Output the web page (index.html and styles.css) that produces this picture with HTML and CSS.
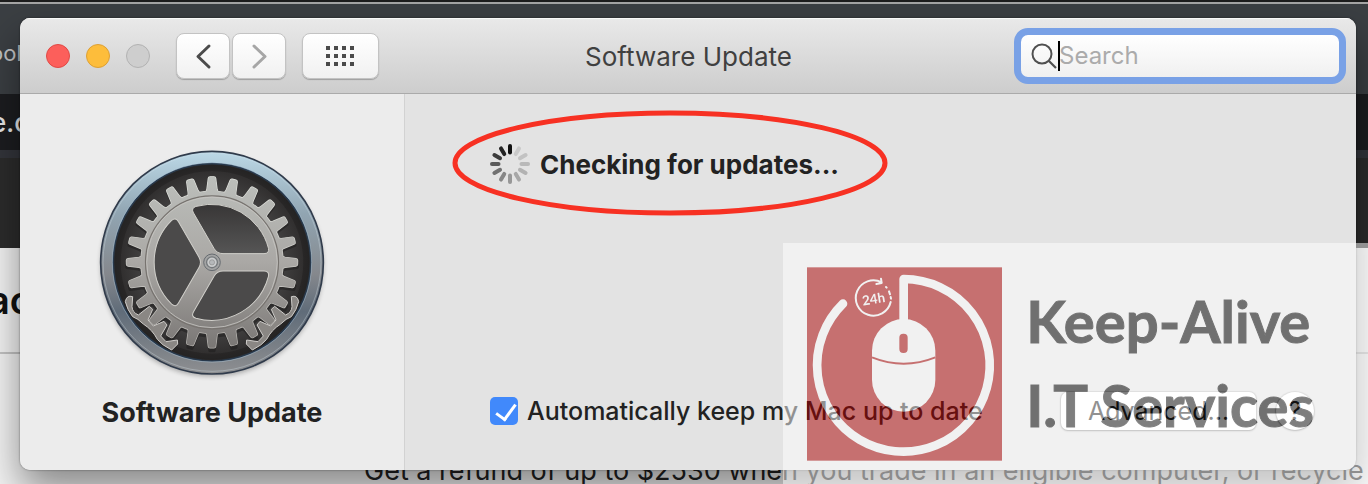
FILE: index.html
```
<!DOCTYPE html>
<html lang="en">
<head>
<meta charset="utf-8">
<title>Software Update</title>
<link rel="stylesheet" href="styles.css">
</head>
<body>
<div class="desktop">
  <div class="browser">
    <div class="tabs"><span>ool</span></div>
    <div class="address"><span>e.c</span></div>
    <div class="nav"></div>
    <div class="heading"><span>ac</span></div>
    <p class="refund">Get a refund of up to $2530 when you trade in an eligible computer, or recycle</p>
  </div>

  <main class="window">
    <header class="toolbar">
      <div class="lights">
        <button class="light close" aria-label="Close"></button>
        <button class="light minimize" aria-label="Minimize"></button>
        <button class="light zoom" aria-label="Zoom" disabled></button>
      </div>
      <div class="history">
        <button class="tool" aria-label="Back"><svg width="52" height="44" viewBox="1 0 52 44"><path d="M33 12 22 22.500 33 33" fill="none" stroke="#4c4c4c" stroke-width="3" stroke-linecap="round" stroke-linejoin="round"/></svg></button>
        <button class="tool" aria-label="Forward"><svg width="52" height="44" viewBox="1 0 52 44"><path d="M22 12 33 22.500 22 33" fill="none" stroke="#a6a6a6" stroke-width="3" stroke-linecap="round" stroke-linejoin="round"/></svg></button>
      </div>
      <button class="tool" aria-label="Show all"><svg width="75" height="44" viewBox="0 0 75 44"><path d="M23 14h28M23 22h28M23 30h28" stroke="#4a4a4a" stroke-width="4" stroke-dasharray="4 4"/></svg></button>
      <h1 class="title">Software Update</h1>
      <label class="search">
        <svg width="26" height="26" viewBox="0 0 26 26"><circle cx="11" cy="11" r="9.500" fill="none" stroke="#505050" stroke-width="2"/><path d="m18 18 7 7" stroke="#505050" stroke-width="2.200"/></svg>
        <span class="caret"></span>
        <input type="search" placeholder="Search" aria-label="Search">
      </label>
    </header>

    <div class="body">
      <aside class="sidebar">
        <svg class="gear" width="245" height="245" viewBox="0 0 735 735" aria-hidden="true">
          <defs>
            <linearGradient id="rim" x1="0" y1="0" x2="0" y2="1"><stop offset="0" stop-color="#bcd9e7"/><stop offset=".28" stop-color="#91a5b2"/><stop offset=".55" stop-color="#85888d"/><stop offset=".72" stop-color="#606c79"/><stop offset="1" stop-color="#8e8f91"/></linearGradient>
            <linearGradient id="metal" x1="0" y1="0" x2="0" y2="1"><stop offset="0" stop-color="#bdc0bc"/><stop offset=".5" stop-color="#aaa8a5"/><stop offset="1" stop-color="#777472"/></linearGradient>
            <linearGradient id="edge" x1="0" y1="0" x2="0" y2="1"><stop offset="0" stop-color="#e2e4df"/><stop offset="1" stop-color="#b5b2ae"/></linearGradient>
            <radialGradient id="well"><stop offset="0" stop-color="#5b5b5b"/><stop offset=".65" stop-color="#464545"/><stop offset="1" stop-color="#2b2929"/></radialGradient>
            <linearGradient id="hole" gradientUnits="userSpaceOnUse" x1="0" y1="-60" x2="0" y2="60"><stop offset="0" stop-color="#373535"/><stop offset=".45" stop-color="#575757"/><stop offset=".53" stop-color="#3e3d3d"/><stop offset="1" stop-color="#4e4c4c"/></linearGradient>
            <filter id="soft" x="-20%" y="-20%" width="140%" height="140%"><feGaussianBlur stdDeviation="8"/></filter>
            <path id="tooth" d="M-6.500-69-5-73-3.600-84Q-3.400-85.500-2-85.500H2Q3.400-85.500 3.600-84L5-73 6.500-69Z"/>
            <g id="teeth6"><use href="#tooth"/><use href="#tooth" transform="rotate(15)"/><use href="#tooth" transform="rotate(30)"/><use href="#tooth" transform="rotate(45)"/><use href="#tooth" transform="rotate(60)"/><use href="#tooth" transform="rotate(75)"/></g>
            <g id="wheel"><use href="#teeth6"/><use href="#teeth6" transform="rotate(90)"/><use href="#teeth6" transform="rotate(180)"/><use href="#teeth6" transform="rotate(270)"/><circle r="71"/></g>
            <mask id="face" maskUnits="userSpaceOnUse" x="-90" y="-90" width="180" height="180"><use href="#wheel" fill="#fff"/></mask>
            <mask id="outline" maskUnits="userSpaceOnUse" x="-90" y="-90" width="180" height="180"><use href="#wheel" fill="#fff" stroke="#fff" stroke-width="1.400"/></mask>
            <path id="gap" d="M11-8.700H52Q57.500-8.700 56.500-14A59 59 0 0 0-16.100-55.900Q-21.200-54.100-18.500-49.400L2-13.900Q5-8.700 11-8.700Z"/>
            <path id="claw" d="M106 485Q110 464 128 470L126 500Q127 517 145 525L178 499 188 508 174 540 190 558 222 544 231 555 212 588 228 605 262 600 263 612 245 630Q215 615 202 598 188 570 160 552 143 535 128 530 112 510 106 485Z"/>
          </defs>
          <circle cx="366" cy="376" r="333" fill="#000" opacity=".3" filter="url(#soft)"/>
          <circle cx="366" cy="368" r="334" fill="url(#rim)" stroke="#303b4b" stroke-width="5"/>
          <circle cx="366" cy="367" r="327" fill="none" stroke="#d3e1e8" stroke-width="2" opacity=".55"/>
          <circle cx="366" cy="367" r="296" fill="url(#well)" stroke="#27384b" stroke-width="5"/>
          <circle cx="366" cy="367" r="299" fill="none" stroke="#b4cee0" stroke-width="2" opacity=".7"/>
          <circle cx="366" cy="367" r="283" fill="none" stroke="#111" stroke-width="18" opacity=".25"/>
          <use href="#wheel" fill="#1c1b1b" opacity=".5" transform="translate(366 376) scale(3.050)"/>
          <g fill="#8a8784" stroke="#cfcdca" stroke-width="3"><use href="#claw"/><use href="#claw" transform="matrix(-1 0 0 1 732 0)"/></g>
          <g transform="translate(366 367) scale(3)">
            <rect x="-90" y="-90" width="180" height="180" fill="url(#edge)" mask="url(#outline)"/>
            <rect x="-90" y="-90" width="180" height="180" fill="url(#metal)" mask="url(#face)"/>
            <circle r="66.500" fill="none" stroke="#77736f" stroke-width="1.200"/>
            <circle r="65.300" fill="none" stroke="#c8c7c3" stroke-width=".8"/>
            <g fill="url(#hole)" stroke="#d1d0cb" stroke-width="1"><use href="#gap"/></g>
            <g fill="#4b4a4a" stroke="#d1d0cb" stroke-width="1"><use href="#gap" transform="rotate(120)"/><use href="#gap" transform="rotate(240)"/></g>
            <circle r="8.300" fill="#a3a4a4" stroke="#666b70" stroke-width="1"/>
            <circle r="5.400" fill="#cacccd" stroke="#74787b" stroke-width="1.300"/>
            <circle r="2.600" fill="#b5b8ba" stroke="#888" stroke-width=".6"/>
          </g>
        </svg>
        <h2 class="pane-name">Software Update</h2>
      </aside>

      <section class="pane">
        <div class="status">
          <svg width="40" height="40" viewBox="-20 -20 40 40" aria-hidden="true"><g stroke-width="4" stroke-linecap="round">
            <path d="M0-18V-11.500" stroke="#111"/>
            <path d="M0-18V-11.500" stroke="#c9c9c9" transform="rotate(30)"/>
            <path d="M0-18V-11.500" stroke="#c2c2c2" transform="rotate(60)"/>
            <path d="M0-18V-11.500" stroke="#b9b9b9" transform="rotate(90)"/>
            <path d="M0-18V-11.500" stroke="#b2b2b2" transform="rotate(120)"/>
            <path d="M0-18V-11.500" stroke="#a7a7a7" transform="rotate(150)"/>
            <path d="M0-18V-11.500" stroke="#979797" transform="rotate(180)"/>
            <path d="M0-18V-11.500" stroke="#868686" transform="rotate(210)"/>
            <path d="M0-18V-11.500" stroke="#717171" transform="rotate(240)"/>
            <path d="M0-18V-11.500" stroke="#5b5b5b" transform="rotate(270)"/>
            <path d="M0-18V-11.500" stroke="#3c3c3c" transform="rotate(300)"/>
            <path d="M0-18V-11.500" stroke="#242424" transform="rotate(330)"/>
          </g></svg>
          <strong>Checking for updates...</strong>
          <svg class="callout" width="438" height="108" viewBox="0 0 438 108" aria-hidden="true"><ellipse cx="219" cy="54" rx="215" ry="50" fill="none" stroke="#f73123" stroke-width="5"/></svg>
        </div>
        <div class="options">
          <label class="auto"><input type="checkbox" checked><span>Automatically keep my Mac up to date</span></label>
          <button class="advanced">Advanced...</button>
          <button class="help" aria-label="Help">?</button>
        </div>
      </section>
    </div>
  </main>

  <div class="brand">
    <svg width="195" height="194" viewBox="82 98 585 580" aria-hidden="true">
      <rect x="82" y="98" width="585" height="580" fill="#aa0000"/>
      <path d="M372 260V133A259 259 0 1 1 190 207" fill="none" stroke="#fff" stroke-width="26" stroke-linecap="round" stroke-linejoin="round"/>
      <path d="M277 348a95 95 0 0 1 190 0v88a95 95 0 0 1-190 0Z" fill="#fff"/>
      <path d="M277 368Q372 406 467 368" fill="none" stroke="#aa0000" stroke-width="6"/>
      <rect x="359" y="297" width="25" height="58" rx="12" fill="#aa0000"/>
      <path d="M306 143A53 53 0 1 0 333 202M290 148l16-3-2-13" fill="none" stroke="#fff" stroke-width="6" stroke-linecap="round" stroke-linejoin="round"/>
      <path d="M319 157l2 2M328 170l3 9M333 187l1 5" stroke="#fff" stroke-width="6" stroke-linecap="round"/>
      <text x="282" y="207" class="hours" transform="rotate(-9 282 195)">24h</text>
    </svg>
    <p class="brand-name"><span>Keep-Alive</span><span>I.T Services</span></p>
  </div>
</div>
</body>
</html>
```
FILE: styles.css
```
* { box-sizing: border-box; }

body {
  margin: 0;
  font-family: Inter, "Liberation Sans", sans-serif;
  color: #222;
}

h1, h2, p { margin: 0; }

button {
  padding: 0;
  border: 0;
  font: inherit;
  color: inherit;
}

svg { display: block; flex: none; }

.desktop {
  display: grid;
  min-height: 100vh;
  overflow: hidden;
}

.browser, .window, .brand { grid-area: 1 / 1; }

/* Page behind the window */
.browser {
  display: flex;
  flex-direction: column;
  min-width: 0;
  background: #f4f4f4;
  white-space: nowrap;
}

.tabs {
  height: 94px;
  padding-top: 35px;
  border-top: 2px solid #1d1d1d;
  background: linear-gradient(#a5a5a5 2px, #3b3f43 2px);
  font-size: 22px;
  line-height: 32px;
  color: #c4c4c6;
}

.tabs span { margin-left: -10px; }

.address {
  height: 64px;
  border-bottom: 8px solid #33353b;
  background: #1c1d20;
  font-size: 26px;
  font-weight: 500;
  line-height: 58px;
  color: #e8e8ea;
}

.address span { margin-left: -9px; }

.nav { height: 90px; background: #2c2c2c; }

.heading {
  height: 106px;
  border-bottom: 2px solid #c4c4c4;
  font-size: 38px;
  font-weight: 600;
  line-height: 104px;
  color: #111;
}

.heading span { margin-left: -12px; }

.refund {
  margin-top: auto;
  padding-left: 364px;
  font-size: 27px;
  line-height: 26px;
}

/* Preferences window */
.window {
  display: flex;
  flex-direction: column;
  margin: 18px 12px 14px 20px;
  border-radius: 10px;
  overflow: hidden;
  background: #e3e3e3;
  box-shadow: 0 0 2px rgba(0, 0, 0, .5), 0 20px 40px rgba(0, 0, 0, .45);
}

.toolbar {
  display: flex;
  align-items: center;
  height: 76px;
  padding: 0 10px 0 26px;
  border-bottom: 1px solid #aaa;
  background: linear-gradient(#e9e9e9, #cdcdcd);
  box-shadow: inset 0 1px #f8f8f8;
}

.lights { display: flex; gap: 16px; margin-right: 26px; }

.light {
  width: 24px;
  height: 24px;
  border: 1px solid #b2b2b2;
  border-radius: 50%;
  background: #cecece;
}

.close { border-color: #e04a46; background: #fc5f5b; }
.minimize { border-color: #dda035; background: #fdbd3b; }

.history { display: flex; gap: 2px; margin-right: 16px; }

.tool {
  border: 1px solid #c3c3c3;
  border-radius: 8px;
  background: linear-gradient(#fff, #f1f1f1);
  box-shadow: 0 1px 1px rgba(0, 0, 0, .25);
}

.title {
  flex: 1;
  padding: 2px 16px 0 0;
  font-size: 26px;
  font-weight: 400;
  text-align: center;
  color: #404040;
}

.search {
  position: relative;
  display: flex;
  align-items: center;
  gap: 2px;
  width: 332px;
  height: 56px;
  padding-left: 10px;
  border: 7px solid #79a1e6;
  border-radius: 14px;
  background: linear-gradient(#fff, #f0f0f0);
}

.search input {
  flex: 1;
  min-width: 0;
  padding: 0;
  border: 0;
  outline: 0;
  background: none;
  font: 24px Inter, "Liberation Sans", sans-serif;
}

.search input::placeholder { color: #ababab; opacity: 1; }

.caret {
  position: absolute;
  left: 37px;
  width: 2px;
  height: 30px;
  background: #000;
}

.body { display: flex; flex: 1; }

.sidebar {
  display: flex;
  flex-direction: column;
  align-items: center;
  width: 385px;
  padding-top: 46px;
  border-right: 1px solid #d2d2d2;
  background: #ececec;
}

.pane-name { margin-top: 12px; font-size: 27px; font-weight: 700; line-height: 32px; }

.pane {
  display: flex;
  flex: 1;
  flex-direction: column;
  justify-content: space-between;
  padding: 50px 42px 40px 85px;
}

.status {
  position: relative;
  display: flex;
  align-items: center;
  gap: 10px;
  font-size: 26px;
}

.callout { position: absolute; left: -39px; top: -35px; }

.options { display: flex; align-items: center; gap: 20px; font-size: 25px; }

.auto { display: flex; align-items: center; gap: 9px; margin-right: auto; font-weight: 500; }

.auto input {
  appearance: none;
  width: 28px;
  height: 28px;
  margin: 0;
  border-radius: 5px;
  background: #4189fb;
}

.auto input::before {
  content: "";
  display: block;
  width: 9px;
  height: 17px;
  margin: 3px 0 0 10px;
  border: solid #fff;
  border-width: 0 3px 3px 0;
  transform: rotate(36deg);
}

.advanced, .help {
  height: 38px;
  background: #fff;
  box-shadow: 0 0 1px 1px rgba(0, 0, 0, .15), 0 1px 2px rgba(0, 0, 0, .3);
}

.advanced { width: 195px; border-radius: 7px; }
.help { width: 38px; border-radius: 50%; }

/* Translucent company mark */
.brand {
  z-index: 1;
  display: flex;
  gap: 24px;
  place-self: end;
  padding: 24px 54px 23px 24px;
  background: #fff;
  opacity: .5;
}

.brand-name {
  display: flex;
  flex-direction: column;
  padding-top: 12px;
  font: 700 58px/84px Lato, sans-serif;
  color: #000;
  -webkit-text-stroke: 1px #000;
}

.hours {
  font: 700 40px Lato, sans-serif;
  fill: #fff;
  text-anchor: middle;
}
```
